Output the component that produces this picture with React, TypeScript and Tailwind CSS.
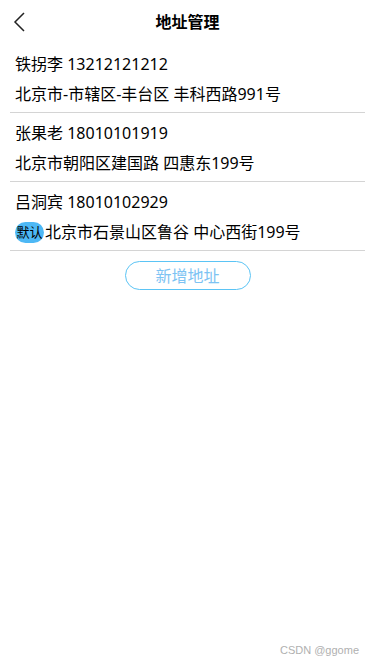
import React from 'react'

interface Address {
  name: string
  phone: string
  detail: string
  isDefault?: boolean
}

const addresses: Address[] = [
  { name: '铁拐李', phone: '13212121212', detail: '北京市-市辖区-丰台区 丰科西路991号' },
  { name: '张果老', phone: '18010101919', detail: '北京市朝阳区建国路 四惠东199号' },
  { name: '吕洞宾', phone: '18010102929', detail: '北京市石景山区鲁谷 中心西街199号', isDefault: true },
]

const font = "font-['Noto_Sans','Noto_Sans_CJK_SC',sans-serif]"

export default function App() {
  return (
    <div className={`relative w-[375px] h-[667px] bg-white text-black ${font}`}>
      <div className="relative flex items-center justify-center h-[44px]">
        <button className="absolute left-[13px] top-[11px]" aria-label="back">
          <svg width="12" height="22" viewBox="0 0 12 22" fill="none">
            <path d="M11 2 L2 11 L11 20" stroke="#222" strokeWidth="1.5" />
          </svg>
        </button>
        <h1 className="text-[16px] font-bold leading-none -mt-[1px]">地址管理</h1>
      </div>

      <div className="px-[10px]">
        {addresses.map((a) => (
          <div key={a.phone} className="border-b border-[#d4d4d4] pt-[5px] pb-[3px] px-[5px]">
            <div className="h-[30px] leading-[30px] text-[16px]">
              {a.name} {a.phone}
            </div>
            <div className="flex items-center h-[30px] text-[16px]">
              {a.isDefault && (
                <span className="mr-[1px] flex items-center justify-center w-[29px] h-[21px] rounded-full bg-[#4db8f5] text-[13px] leading-none">
                  默认
                </span>
              )}
              <span>{a.detail}</span>
            </div>
          </div>
        ))}
      </div>

      <div className="flex justify-center mt-[10px]">
        <button className="w-[126px] h-[29px] rounded-full border border-[#5bc4f5] text-[#7dc3f3] text-[16px] leading-none">
          新增地址
        </button>
      </div>

      <div className="absolute right-[16px] bottom-[9px] text-[11px] text-[#b0b0b0] font-['Liberation_Sans',sans-serif]">
        CSDN @ggome
      </div>
    </div>
  )
}
